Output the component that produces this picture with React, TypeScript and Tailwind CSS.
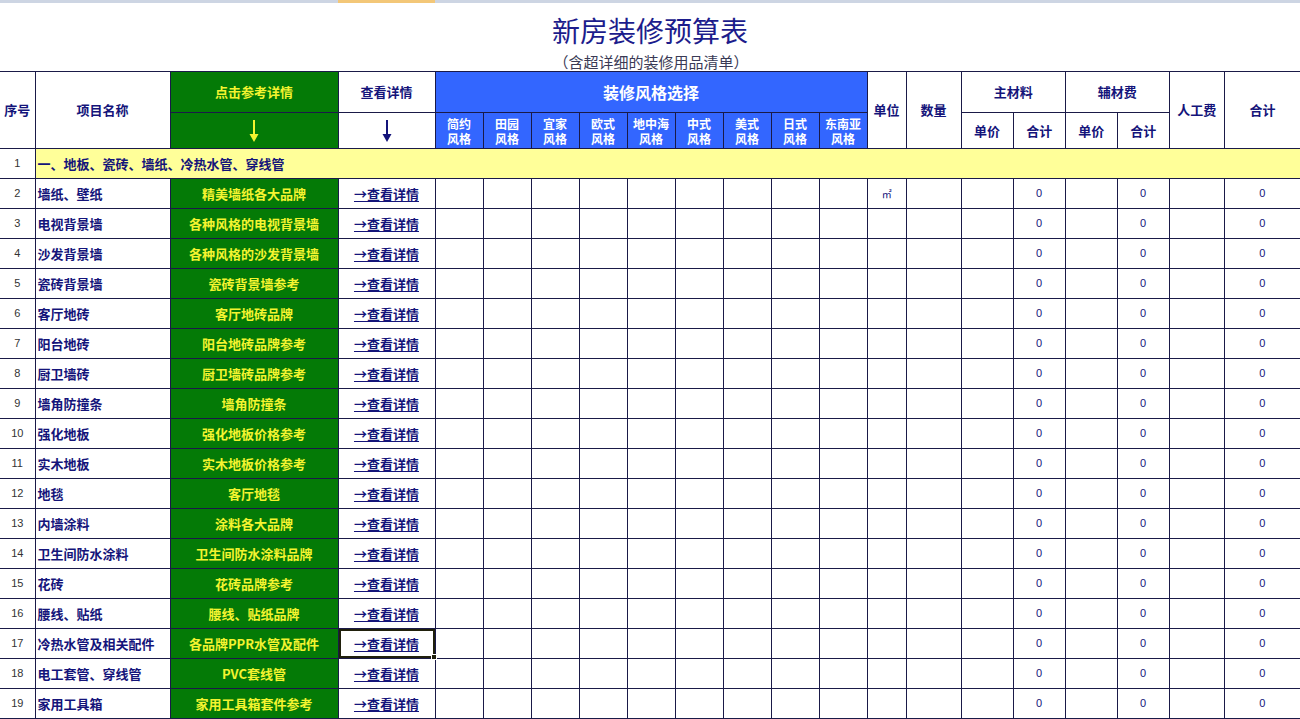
import React from "react";

const rows: [number, string, string][] = [
  [2, "墙纸、壁纸", "精美墙纸各大品牌"],
  [3, "电视背景墙", "各种风格的电视背景墙"],
  [4, "沙发背景墙", "各种风格的沙发背景墙"],
  [5, "瓷砖背景墙", "瓷砖背景墙参考"],
  [6, "客厅地砖", "客厅地砖品牌"],
  [7, "阳台地砖", "阳台地砖品牌参考"],
  [8, "厨卫墙砖", "厨卫墙砖品牌参考"],
  [9, "墙角防撞条", "墙角防撞条"],
  [10, "强化地板", "强化地板价格参考"],
  [11, "实木地板", "实木地板价格参考"],
  [12, "地毯", "客厅地毯"],
  [13, "内墙涂料", "涂料各大品牌"],
  [14, "卫生间防水涂料", "卫生间防水涂料品牌"],
  [15, "花砖", "花砖品牌参考"],
  [16, "腰线、贴纸", "腰线、贴纸品牌"],
  [17, "冷热水管及相关配件", "各品牌PPR水管及配件"],
  [18, "电工套管、穿线管", "PVC套线管"],
  [19, "家用工具箱", "家用工具箱套件参考"],
];

const styles = [
  ["简约", "风格"],
  ["田园", "风格"],
  ["宜家", "风格"],
  ["欧式", "风格"],
  ["地中海", "风格"],
  ["中式", "风格"],
  ["美式", "风格"],
  ["日式", "风格"],
  ["东南亚", "风格"],
];

const B = "border border-[#1a1a48]";

function DownArrow({ color }: { color: string }) {
  return (
    <svg width="10" height="24" viewBox="0 0 10 24" className="mx-auto block">
      <line x1="5" y1="1" x2="5" y2="17" stroke={color} strokeWidth="2" />
      <polygon points="0.5,15 9.5,15 5,23" fill={color} />
    </svg>
  );
}

export default function App() {
  return (
    <div
      className="w-[1300px] h-[719px] overflow-hidden bg-white"
      style={{ fontFamily: '"Noto Sans CJK SC", "Liberation Sans", sans-serif' }}
    >
      {/* column header strip */}
      <div className="flex h-[3px]">
        <div className="w-[338px] bg-[#cdd5e3]" />
        <div className="w-[97px] bg-[#f3c778]" />
        <div className="flex-1 bg-[#cdd5e3]" />
      </div>
      {/* title */}
      <div className="h-[68px] pt-[12px] flex flex-col items-center">
        <div className="text-[28px] leading-[30px] text-[#1c1c8c]">新房装修预算表</div>
        <div className="mt-[7px] text-[15px] leading-[20px] text-[#3a3a55] pl-[2px]">（含超详细的装修用品清单）</div>
      </div>

      <table className="table-fixed border-collapse w-[1300px] text-[13px]">
        <colgroup>
          <col className="w-[35px]" />
          <col className="w-[135px]" />
          <col className="w-[168px]" />
          <col className="w-[97px]" />
          {styles.map((_, i) => (
            <col key={i} className="w-[48px]" />
          ))}
          <col className="w-[39px]" />
          <col className="w-[55px]" />
          <col className="w-[52px]" />
          <col className="w-[52px]" />
          <col className="w-[52px]" />
          <col className="w-[52px]" />
          <col className="w-[55px]" />
          <col className="w-[76px]" />
        </colgroup>
        <thead>
          <tr className="h-[41px] font-bold text-[#14147a]">
            <th rowSpan={2} className="border-y border-r border-[#1a1a48] font-bold">序号</th>
            <th rowSpan={2} className={`${B} font-bold`}>项目名称</th>
            <th className={`${B} bg-[#047a06] text-[#f4f430] font-bold`}>点击参考详情</th>
            <th className={`${B} font-bold`}>查看详情</th>
            <th colSpan={9} className={`${B} bg-[#3366ff] text-white text-[16px] font-bold`}>
              装修风格选择
            </th>
            <th rowSpan={2} className={`${B} font-bold`}>单位</th>
            <th rowSpan={2} className={`${B} font-bold`}>数量</th>
            <th colSpan={2} className={`${B} font-bold`}>主材料</th>
            <th colSpan={2} className={`${B} font-bold`}>辅材费</th>
            <th rowSpan={2} className={`${B} font-bold`}>人工费</th>
            <th rowSpan={2} className="border-y border-l border-[#1a1a48] font-bold">合计</th>
          </tr>
          <tr className="h-[36px] font-bold text-[#14147a]">
            <th className={`${B} bg-[#047a06]`}>
              <DownArrow color="#f4f430" />
            </th>
            <th className={B}>
              <DownArrow color="#14147a" />
            </th>
            {styles.map((s, i) => (
              <th key={i} className={`${B} bg-[#3366ff] text-white text-[12px] leading-[15px] font-bold`}>
                <div>{s[0]}</div>
                <div>{s[1]}</div>
              </th>
            ))}
            <th className={`${B} font-bold`}>单价</th>
            <th className={`${B} font-bold`}>合计</th>
            <th className={`${B} font-bold`}>单价</th>
            <th className={`${B} font-bold`}>合计</th>
          </tr>
        </thead>
        <tbody>
          <tr className="h-[30px]">
            <td className="border-y border-r border-[#1a1a48] text-center text-[11px] text-[#333] font-['Liberation_Sans']">
              1
            </td>
            <td colSpan={20} className={`${B} bg-[#ffff99] pl-[2px] font-bold text-[#14147a]`}>
              一、地板、瓷砖、墙纸、冷热水管、穿线管
            </td>
          </tr>
          {rows.map(([n, name, ref]) => (
            <tr key={n} className="h-[30px]">
              <td className="border-y border-r border-[#1a1a48] text-center text-[11px] text-[#333] font-['Liberation_Sans']">
                {n}
              </td>
              <td className={`${B} pl-[2px] font-bold text-[#14147a] whitespace-nowrap`}>{name}</td>
              <td className={`${B} bg-[#047a06] text-center font-bold text-[#f4f430] whitespace-nowrap`}>{ref}</td>
              <td className={`${B} text-center relative`}>
                <span className="font-bold text-[#14147a] underline underline-offset-2">→查看详情</span>
                {n === 17 && (
                  <div className="absolute inset-0 border-2 border-[#20200c]">
                    <div className="absolute right-[-4px] bottom-[-4px] w-[6px] h-[6px] bg-[#20200c] border border-white" />
                  </div>
                )}
              </td>
              {styles.map((_, i) => (
                <td key={i} className={B} />
              ))}
              <td className={`${B} text-center text-[10px] text-[#14147a]`}>{n === 2 ? "㎡" : ""}</td>
              <td className={B} />
              <td className={B} />
              <td className={`${B} text-center text-[11px] text-[#14147a] font-['Liberation_Sans']`}>0</td>
              <td className={B} />
              <td className={`${B} text-center text-[11px] text-[#14147a] font-['Liberation_Sans']`}>0</td>
              <td className={B} />
              <td className="border-y border-l border-[#1a1a48] text-center text-[11px] text-[#14147a] font-['Liberation_Sans']">
                0
              </td>
            </tr>
          ))}
        </tbody>
      </table>
    </div>
  );
}
